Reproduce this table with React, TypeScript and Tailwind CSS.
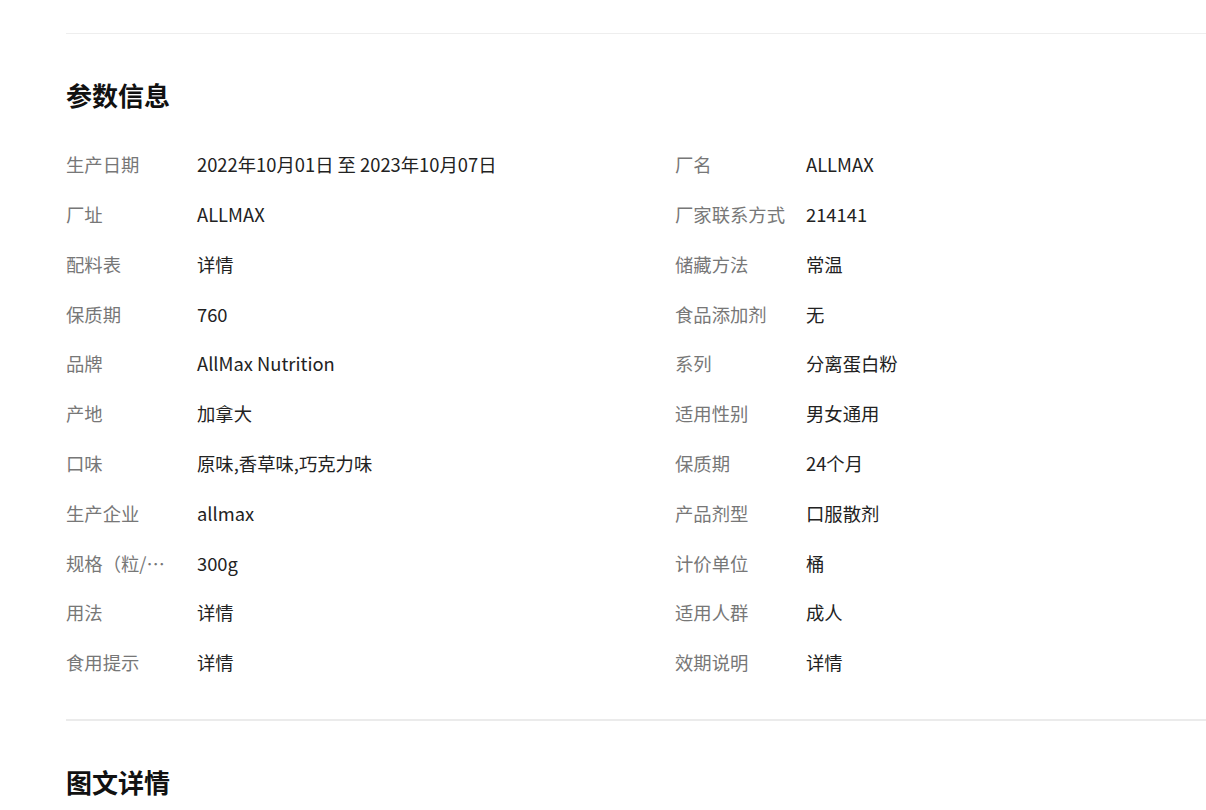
const params: [string, string][] = [
  ["生产日期", "2022年10月01日 至 2023年10月07日"],
  ["厂名", "ALLMAX"],
  ["厂址", "ALLMAX"],
  ["厂家联系方式", "214141"],
  ["配料表", "详情"],
  ["储藏方法", "常温"],
  ["保质期", "760"],
  ["食品添加剂", "无"],
  ["品牌", "AllMax Nutrition"],
  ["系列", "分离蛋白粉"],
  ["产地", "加拿大"],
  ["适用性别", "男女通用"],
  ["口味", "原味,香草味,巧克力味"],
  ["保质期", "24个月"],
  ["生产企业", "allmax"],
  ["产品剂型", "口服散剂"],
  ["规格（粒/袋/ml/g）", "300g"],
  ["计价单位", "桶"],
  ["用法", "详情"],
  ["适用人群", "成人"],
  ["食用提示", "详情"],
  ["效期说明", "详情"],
];

export default function App() {
  return (
    <div
      className="min-h-[810px] w-full overflow-hidden bg-white"
      style={{ fontFamily: '"Noto Sans CJK SC", "Noto Sans", sans-serif' }}
    >
      <div className="ml-[66px] w-[1218px] pt-[33px]">
        <div className="border-t border-[#eeeeee]" />
        <h2 className="mt-[43px] text-[26px] font-bold leading-[36px] text-[#111111]">参数信息</h2>
        <div className="mt-[27px] grid grid-cols-2">
          {params.map(([label, value], i) => (
            <div key={i} className="flex h-[49.8px] items-center text-[18.35px]">
              <span className="w-[112px] shrink-0 truncate text-[#777777]">{label}</span>
              <span className="ml-[19px] text-[#222222]">{value}</span>
            </div>
          ))}
        </div>
        <div className="mt-[31px] border-t-2 border-[#ebebeb]" />
        <h2 className="mt-[43px] text-[26px] font-bold leading-[36px] text-[#111111]">图文详情</h2>
      </div>
    </div>
  );
}
